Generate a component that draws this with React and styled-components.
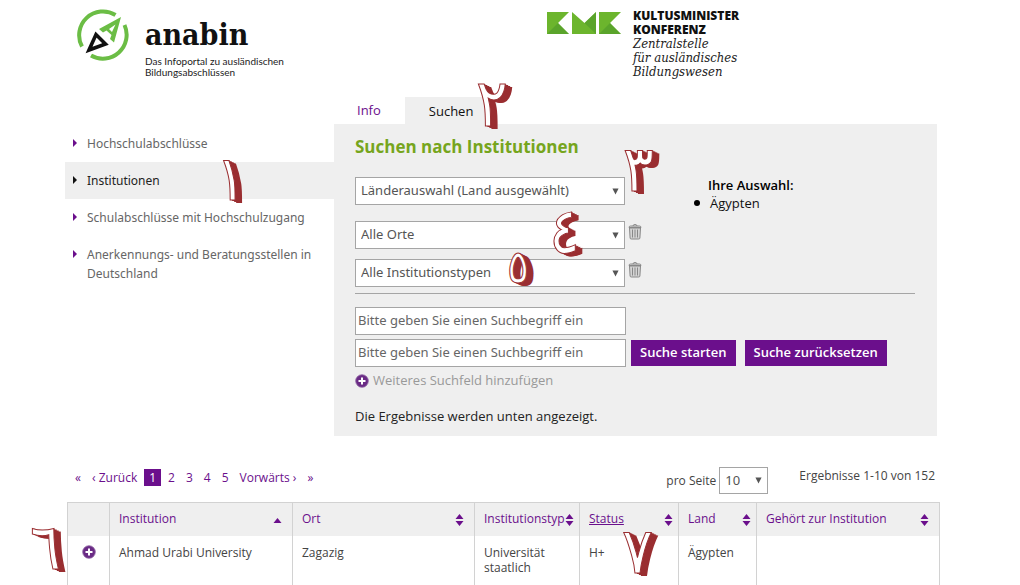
import React from 'react';
import styled, { createGlobalStyle, css } from 'styled-components';

const purple = '#6b0f8c';
const grey = '#efefef';
const red = '#9a2e31';
const sans = '"Open Sans", "Noto Sans", sans-serif';
const wide = '"Noto Sans", "Open Sans", sans-serif';

const GlobalStyle = createGlobalStyle`
  *, *::before, *::after { box-sizing: border-box; }
  body { margin: 0; background: #fff; color: #222; font-family: ${sans}; font-size: 13px; line-height: 19px; }
  h2, p, ul { margin: 0; padding: 0; }
  a { color: inherit; text-decoration: none; }
  button, input, select { font-family: ${wide}; font-size: 13px; margin: 0; border-radius: 0; }
`;

const Page = styled.div`
  position: relative;
  padding: 0 80px 0 65px;
  overflow: hidden;
`;

const Header = styled.header`
  display: grid;
  grid-template-columns: 481px 1fr;
  height: 97px;
  padding-top: 9px;
`;
const Brand = styled.a`
  display: flex;
  gap: 15px;
  padding-left: 12px;
  align-items: flex-start;
`;
const BrandName = styled.div`
  font: bold 30px/34px "DejaVu Serif Condensed", "DejaVu Serif", serif;
  font-stretch: condensed;
  color: #111;
  padding-top: 9px;
`;
const BrandClaim = styled.div`
  font-family: Lato, sans-serif;
  font-size: 10px;
  line-height: 11px;
  color: #222;
  padding-top: 4px;
`;
const Partner = styled.a`
  display: flex;
  gap: 11px;
  align-items: flex-start;
`;
const PartnerMark = styled.svg`
  margin-top: 3px;
`;
const PartnerName = styled.div`
  font: 800 12px/14px "Open Sans", sans-serif;
  color: #111;
`;
const PartnerUnit = styled.div`
  font: italic 13px/14px "DejaVu Serif Condensed", "DejaVu Serif", serif;
  color: #222;
`;

const Columns = styled.div`
  display: grid;
  grid-template-columns: 269px 1fr;
  padding-right: 3px;
`;
const Nav = styled.nav`
  padding-top: 28px;
  font-family: ${wide};
  font-size: 12px;
  color: #666;
`;
const NavItem = styled.a`
  display: flex;
  gap: 10px;
  padding: 9px 8px;
  ${(p) => p.$active && css`background: ${grey}; color: #222;`}
`;
const NavArrow = styled.svg`
  flex: none;
  margin-top: 5px;
`;

const Tabs = styled.div`
  display: flex;
  height: 27px;
  padding-left: 23px;
  gap: 24px;
`;
const Tab = styled.a`
  padding-top: 4px;
  color: ${purple};
  ${(p) => p.$active && css`
    padding: 5px 24px 0;
    background: ${grey};
    color: #111;
  `}
`;
const Panel = styled.section`
  background: ${grey};
  height: 312px;
  padding: 10px 22px 0 21px;
`;
const Title = styled.h2`
  font-size: 17px;
  line-height: 25px;
  color: #76a51d;
`;
const Filters = styled.div`
  display: grid;
  grid-template-columns: 340px 1fr;
  padding: 18px 0 6px;
  border-bottom: 1px solid #a5a5a5;
`;
const FilterRow = styled.div`
  display: flex;
  gap: 2px;
  margin-bottom: ${(p) => p.$gap || 0}px;
`;
const SelectBox = styled.label`
  display: grid;
  width: ${(p) => p.$width}px;
  align-items: center;
  > * { grid-area: 1 / 1; }
  svg { justify-self: end; margin-right: 6px; pointer-events: none; }
`;
const Select = styled.select`
  appearance: none;
  width: 100%;
  height: ${(p) => p.$height}px;
  padding: 0 5px 2px;
  border: 1px solid #a5a5a5;
  background: #fff;
  color: #555;
`;
const IconButton = styled.button`
  display: block;
  padding: 0;
  border: 0;
  background: none;
  line-height: 0;
  svg { display: block; }
`;
const TrashButton = styled(IconButton)`
  align-self: flex-start;
  margin-top: 2px;
`;
const Selection = styled.div`
  padding-left: 13px;
  line-height: 18px;
  margin-top: -1px;
  color: #111;
`;
const SelectionTitle = styled.div`
  color: #000;
  font-weight: 600;
`;
const SelectionList = styled.ul`
  list-style: none;
  margin-left: -14px;
  li { display: flex; align-items: center; gap: 10px; }
  li::before { content: ''; width: 6px; height: 6px; border-radius: 3px; background: #000; }
`;
const SearchRow = styled.div`
  display: flex;
  align-items: center;
  gap: 9px;
  margin-top: ${(p) => p.$top}px;
`;
const SearchInput = styled.input`
  width: 271px;
  height: 28px;
  margin-right: -4px;
  padding: 0 2px 2px;
  border: 1px solid #a5a5a5;
  background: #fff;
  &::placeholder { color: #666; opacity: 1; }
`;
const Button = styled.button`
  height: 26px;
  padding: 0 9px 2px;
  border: 0;
  background: ${purple};
  color: #fff;
  font-family: ${sans};
  font-weight: 600;
  white-space: nowrap;
`;
const AddField = styled.button`
  display: flex;
  align-items: center;
  gap: 4px;
  margin-top: 4px;
  padding: 0;
  border: 0;
  background: none;
  color: #999;
  font-family: ${sans};
  line-height: 19px;
`;
const Note = styled.p`
  margin-top: 17px;
  color: #222;
`;

const ResultBar = styled.div`
  display: flex;
  height: 66px;
  padding: 31px 5px 0 10px;
  font-size: 12px;
`;
const Pager = styled.nav`
  display: flex;
  flex: 1;
  gap: 11px;
  padding-top: 2px;
  color: ${purple};
`;
const PageLink = styled.a`
  height: 17px;
  line-height: 17px;
  ${(p) => p.$current && css`
    margin: 0 -4px;
    padding: 0 5px;
    background: ${purple};
    color: #fff;
  `}
`;
const PerPage = styled.label`
  display: flex;
  align-items: center;
  gap: 3px;
  height: 27px;
  margin-right: 31px;
  color: #444;
`;
const Count = styled.span`
  line-height: 17px;
  color: #444;
`;

const Results = styled.table`
  width: calc(100% - 2px);
  margin-left: 2px;
  table-layout: fixed;
  border-collapse: collapse;
  font-size: 12px;
  line-height: 15px;
`;
const Head = styled.th`
  height: 33px;
  padding: 0 9px 1px;
  border: 1px solid #d2d2d2;
  border-bottom: 0;
  background: ${grey};
  color: ${purple};
  font-weight: 400;
  text-align: left;
`;
const HeadInner = styled.div`
  display: flex;
  align-items: center;
  justify-content: space-between;
  margin-right: ${(p) => (p.$tight ? -4 : 1)}px;
  a { text-decoration: ${(p) => (p.$underline ? 'underline' : 'none')}; }
  svg { flex: none; margin-top: 2px; }
`;
const Cell = styled.td`
  height: 50px;
  padding: 9px 9px 0;
  border: solid #d2d2d2;
  border-width: 0 1px;
  color: #444;
  vertical-align: top;
`;
const Expand = styled(IconButton)`
  margin: 0 auto;
`;

/* Hand-placed step numbers that lie over the page */
const Step = styled.span`
  position: absolute;
  left: ${(p) => p.$x}px;
  top: ${(p) => p.$y}px;
  font: ${(p) => p.$size}px/1 "DejaVu Sans Condensed", "DejaVu Sans", sans-serif;
  color: #fff;
  -webkit-text-stroke: 1px ${red};
  text-shadow: 1px 0 ${red}, 2px 1px ${red}, 3px 1px ${red}, 4px 2px ${red}, 5px 2px ${red}, 6px 3px ${red}, 7px 3px ${red};
  pointer-events: none;
`;

const Caret = () => (
  <svg width="7" height="7" viewBox="0 0 8 8" aria-hidden="true"><path d="M.5.500h7L4 7.500z" fill="#555" /></svg>
);

const Trash = () => (
  <svg width="16" height="17" viewBox="0 0 16 17" fill="none" aria-hidden="true">
    <path d="M2.500 5h11l-.6 10q0 1-1.200 1H4.300q-1.200 0-1.200-1z" fill="#d4d4d4" stroke="#888" />
    <path d="M5.500 6.500v8M8 6.500v8M10.500 6.500v8" stroke="#888" />
    <path d="M2 4.500Q2 3 3.500 3h9Q14 3 14 4.500z" fill="#ddd" stroke="#888" />
    <path d="M6 3q0-1.500 2-1.500T10 3" stroke="#888" />
  </svg>
);

const Plus = () => (
  <svg width="14" height="14" viewBox="0 0 14 14" aria-hidden="true">
    <circle cx="7" cy="7" r="6.300" fill="#6a2b85" stroke="#8f63a3" strokeWidth=".8" />
    <path d="M7 3.500v7M3.500 7h7" stroke="#fff" strokeWidth="2" />
  </svg>
);

const Sort = ({ up }) => (
  <svg width="9" height="12" viewBox="0 0 9 12" fill={purple} aria-hidden="true">
    {up ? <path d="M.5 9 4.500 4l4 5z" /> : <path d="M.5 5 4.500 0l4 5zM.5 7h8l-4 5z" />}
  </svg>
);

const AnabinLogo = () => (
  <svg width="53" height="53" viewBox="0 0 53 53" fill="none" aria-hidden="true">
    <path d="M38.500 6A23.800 23.800 0 0 0 5 37.500M47.500 16A23.800 23.800 0 0 1 14 46.500" stroke="#6bbd45" strokeWidth="4" />
    <path d="M44 8 22 20l4 3.500 3.500-2 5 4.500-1.500 4 4 3.500zM38.500 15.500l-3.500 7.500-3-3z" fill="#6bbd45" fillRule="evenodd" />
    <path d="M12 41 19 25.500 28.500 35z" stroke="#111" strokeWidth="3.600" />
  </svg>
);

const KmkLogo = () => (
  <PartnerMark width="76" height="23" viewBox="0 0 76 23" aria-hidden="true">
    <path d="M1 0h22L12 11l11 11H1zM26 0l12.500 11L50 0v22H26zM53 0h22L64 11l11 11H53z" fill="#6cb52d" />
    <path d="M1 22l11-11 11 11zM38.500 11 50 0v22zM53 22l11-11 11 11z" fill="#4f9a2a" opacity=".6" />
  </PartnerMark>
);

const navItems = [
  'Hochschulabschlüsse',
  'Institutionen',
  'Schulabschlüsse mit Hochschulzugang',
  'Anerkennungs- und Beratungsstellen in Deutschland',
];

const columns = [
  { name: 'Institution', width: 183, up: true },
  { name: 'Ort', width: 182 },
  { name: 'Institutionstyp', width: 105, tight: true },
  { name: 'Status', width: 99, underline: true, tight: true },
  { name: 'Land', width: 78, tight: true },
  { name: 'Gehört zur Institution' },
];

const cells = ['Ahmad Urabi University', 'Zagazig', 'Universität staatlich', 'H+', 'Ägypten', ''];

const pages = ['«', '‹ Zurück', '1', '2', '3', '4', '5', 'Vorwärts ›', '»'];

const steps = [
  { n: '١', x: 216, y: 148, size: 62 },
  { n: '٢', x: 476, y: 71, size: 66 },
  { n: '٣', x: 623, y: 137, size: 64 },
  { n: '٤', x: 549, y: 199, size: 64 },
  { n: '٥', x: 507, y: 244, size: 46 },
  { n: '٦', x: 30, y: 515, size: 64 },
  { n: '٧', x: 622, y: 519, size: 64 },
];

const Dropdown = ({ label, value, width = 270, height = 28 }) => (
  <SelectBox $width={width}>
    <Select aria-label={label} $height={height} defaultValue={value}><option>{value}</option></Select>
    <Caret />
  </SelectBox>
);

export default function App() {
  return (
    <Page>
      <GlobalStyle />
      <Header>
        <Brand href="#">
          <AnabinLogo />
          <div>
            <BrandName>anabin</BrandName>
            <BrandClaim>Das Infoportal zu ausländischen<br />Bildungsabschlüssen</BrandClaim>
          </div>
        </Brand>
        <Partner href="#">
          <KmkLogo />
          <div>
            <PartnerName>KULTUSMINISTER<br />KONFERENZ</PartnerName>
            <PartnerUnit>Zentralstelle<br />für ausländisches<br />Bildungswesen</PartnerUnit>
          </div>
        </Partner>
      </Header>

      <Columns>
        <Nav>
          {navItems.map((name, i) => (
            <NavItem key={name} href="#" $active={i === 1}>
              <NavArrow width="4" height="8" viewBox="0 0 4 8"><path d="M0 0l4 4-4 4z" fill={i === 1 ? '#111' : purple} /></NavArrow>
              <span>{name}</span>
            </NavItem>
          ))}
        </Nav>
        <main>
          <Tabs>
            <Tab href="#">Info</Tab>
            <Tab href="#" $active>Suchen</Tab>
          </Tabs>
          <Panel>
            <Title>Suchen nach Institutionen</Title>
            <Filters>
              <div>
                <FilterRow $gap={16}>
                  <Dropdown label="Land" value="Länderauswahl (Land ausgewählt)" />
                </FilterRow>
                <FilterRow $gap={10}>
                  <Dropdown label="Ort" value="Alle Orte" />
                  <TrashButton aria-label="Ort löschen"><Trash /></TrashButton>
                </FilterRow>
                <FilterRow>
                  <Dropdown label="Institutionstyp" value="Alle Institutionstypen" />
                  <TrashButton aria-label="Institutionstyp löschen"><Trash /></TrashButton>
                </FilterRow>
              </div>
              <Selection>
                <SelectionTitle>Ihre Auswahl:</SelectionTitle>
                <SelectionList><li>Ägypten</li></SelectionList>
              </Selection>
            </Filters>
            <SearchRow $top={13}>
              <SearchInput aria-label="Suchbegriff 1" placeholder="Bitte geben Sie einen Suchbegriff ein" />
            </SearchRow>
            <SearchRow $top={4}>
              <SearchInput aria-label="Suchbegriff 2" placeholder="Bitte geben Sie einen Suchbegriff ein" />
              <Button>Suche starten</Button>
              <Button>Suche zurücksetzen</Button>
            </SearchRow>
            <AddField><Plus />Weiteres Suchfeld hinzufügen</AddField>
            <Note>Die Ergebnisse werden unten angezeigt.</Note>
          </Panel>
        </main>
      </Columns>

      <ResultBar>
        <Pager aria-label="Seiten">
          {pages.map((p) => <PageLink key={p} href="#" $current={p === '1'}>{p}</PageLink>)}
        </Pager>
        <PerPage>pro Seite <Dropdown label="pro Seite" value="10" width={49} height={27} /></PerPage>
        <Count>Ergebnisse 1-10 von 152</Count>
      </ResultBar>

      <Results>
        <colgroup>
          <col width={42} />
          {columns.map((c) => <col key={c.name} width={c.width} />)}
        </colgroup>
        <thead>
          <tr>
            <Head aria-label="Details" />
            {columns.map((c) => (
              <Head key={c.name}>
                <HeadInner $underline={c.underline} $tight={c.tight}><a href="#">{c.name}</a><Sort up={c.up} /></HeadInner>
              </Head>
            ))}
          </tr>
        </thead>
        <tbody>
          <tr>
            <Cell><Expand aria-label="Details anzeigen"><Plus /></Expand></Cell>
            {cells.map((c, i) => <Cell key={columns[i].name}>{c}</Cell>)}
          </tr>
        </tbody>
      </Results>

      {steps.map((s) => <Step key={s.n} $x={s.x} $y={s.y} $size={s.size}>{s.n}</Step>)}
    </Page>
  );
}
